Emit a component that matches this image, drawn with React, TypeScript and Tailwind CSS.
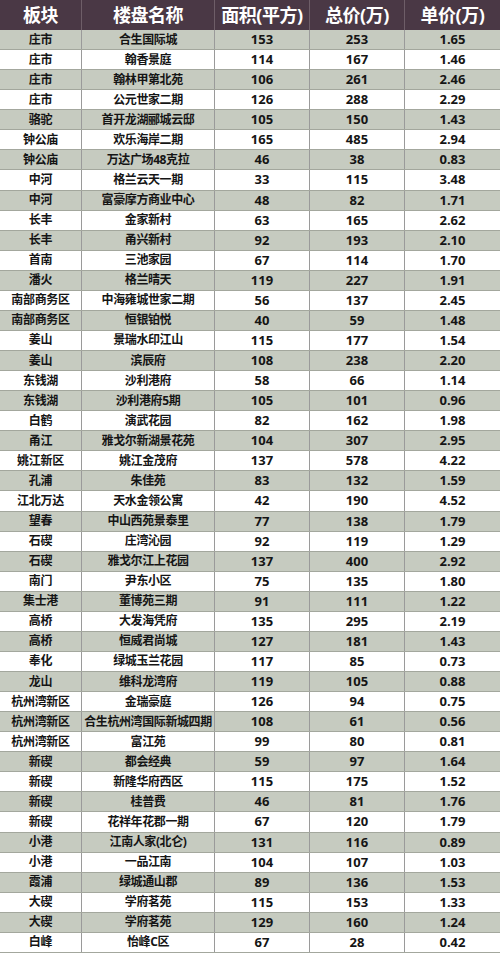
const rows: [string, string, string, string, string][] = [
  ['庄市', '合生国际城', '153', '253', '1.65'],
  ['庄市', '翰香景庭', '114', '167', '1.46'],
  ['庄市', '翰林甲第北苑', '106', '261', '2.46'],
  ['庄市', '公元世家二期', '126', '288', '2.29'],
  ['骆驼', '首开龙湖郦城云邸', '105', '150', '1.43'],
  ['钟公庙', '欢乐海岸二期', '165', '485', '2.94'],
  ['钟公庙', '万达广场48克拉', '46', '38', '0.83'],
  ['中河', '格兰云天一期', '33', '115', '3.48'],
  ['中河', '富豪摩方商业中心', '48', '82', '1.71'],
  ['长丰', '金家新村', '63', '165', '2.62'],
  ['长丰', '甬兴新村', '92', '193', '2.10'],
  ['首南', '三池家园', '67', '114', '1.70'],
  ['潘火', '格兰晴天', '119', '227', '1.91'],
  ['南部商务区', '中海雍城世家二期', '56', '137', '2.45'],
  ['南部商务区', '恒银铂悦', '40', '59', '1.48'],
  ['姜山', '景瑞水印江山', '115', '177', '1.54'],
  ['姜山', '滨辰府', '108', '238', '2.20'],
  ['东钱湖', '沙利港府', '58', '66', '1.14'],
  ['东钱湖', '沙利港府5期', '105', '101', '0.96'],
  ['白鹤', '演武花园', '82', '162', '1.98'],
  ['甬江', '雅戈尔新湖景花苑', '104', '307', '2.95'],
  ['姚江新区', '姚江金茂府', '137', '578', '4.22'],
  ['孔浦', '朱佳苑', '83', '132', '1.59'],
  ['江北万达', '天水金领公寓', '42', '190', '4.52'],
  ['望春', '中山西苑景泰里', '77', '138', '1.79'],
  ['石碶', '庄湾沁园', '92', '119', '1.29'],
  ['石碶', '雅戈尔江上花园', '137', '400', '2.92'],
  ['南门', '尹东小区', '75', '135', '1.80'],
  ['集士港', '董博苑三期', '91', '111', '1.22'],
  ['高桥', '大发海凭府', '135', '295', '2.19'],
  ['高桥', '恒威君尚城', '127', '181', '1.43'],
  ['奉化', '绿城玉兰花园', '117', '85', '0.73'],
  ['龙山', '维科龙湾府', '119', '105', '0.88'],
  ['杭州湾新区', '金瑞豪庭', '126', '94', '0.75'],
  ['杭州湾新区', '合生杭州湾国际新城四期', '108', '61', '0.56'],
  ['杭州湾新区', '富江苑', '99', '80', '0.81'],
  ['新碶', '都会经典', '59', '97', '1.64'],
  ['新碶', '新隆华府西区', '115', '175', '1.52'],
  ['新碶', '桂普费', '46', '81', '1.76'],
  ['新碶', '花祥年花郡一期', '67', '120', '1.79'],
  ['小港', '江南人家(北仑)', '131', '116', '0.89'],
  ['小港', '一品江南', '104', '107', '1.03'],
  ['霞浦', '绿城通山郡', '89', '136', '1.53'],
  ['大碶', '学府茗苑', '115', '153', '1.33'],
  ['大碶', '学府茗苑', '129', '160', '1.24'],
  ['白峰', '怡峰C区', '67', '28', '0.42'],
];

const headers = ['板块', '楼盘名称', '面积(平方)', '总价(万)', '单价(万)'];
const widths = ['w-[82px]', 'w-[133px]', 'w-[95px]', 'w-[95px]', 'w-[95px]'];
const sizes = ['text-[12px] tracking-[-0.3px]', 'text-[12px] tracking-[-0.4px]', 'text-[13px]', 'text-[13px]', 'text-[13px]'];

export default function App() {
  return (
    <div className="w-[500px] h-[953px] flex flex-col bg-white font-['Open_Sans','Noto_Sans_CJK_SC',sans-serif] font-bold text-[#151515] overflow-hidden">
      <div className="h-[30px] shrink-0 flex bg-[#4a3845] text-white text-[18px]">
        {headers.map((h, i) => (
          <div
            key={h}
            className={`${widths[i]} shrink-0 flex items-center justify-center border-r border-[#6e5e68] last:border-r-0 tracking-tight`}
          >
            {h}
          </div>
        ))}
      </div>
      {rows.map((r, idx) => (
        <div
          key={idx}
          className={`flex-1 flex border-b border-[#a3a79d] ${idx % 2 === 0 ? 'bg-[#c6cbc0]' : 'bg-white'}`}
        >
          {r.map((c, i) => (
            <div
              key={i}
              className={`${widths[i]} ${sizes[i]} shrink-0 flex items-center justify-center border-r border-[#9a9a9a] last:border-r-0 whitespace-nowrap leading-none`}
            >
              {c}
            </div>
          ))}
        </div>
      ))}
    </div>
  );
}
